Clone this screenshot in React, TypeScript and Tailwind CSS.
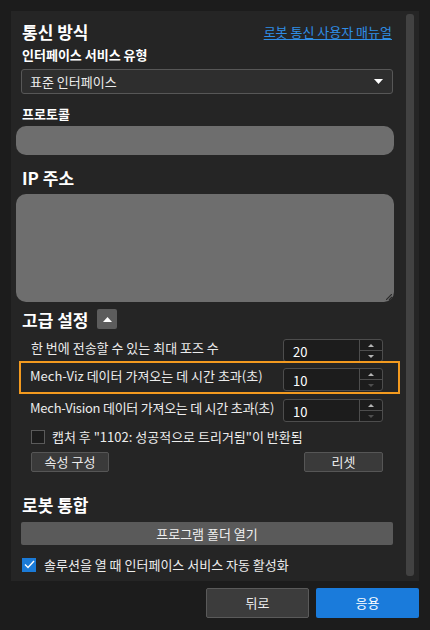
import React from 'react';

const FONT = "font-['Noto_Sans_CJK_KR','Noto_Sans',sans-serif]";

function Caret({ up = false, color = '#ffffff', w = 9, h = 5 }: { up?: boolean; color?: string; w?: number; h?: number }) {
  return (
    <svg width={w} height={h} viewBox={`0 0 ${w} ${h}`}>
      {up ? (
        <polygon points={`0,${h} ${w / 2},0 ${w},${h}`} fill={color} />
      ) : (
        <polygon points={`0,0 ${w},0 ${w / 2},${h}`} fill={color} />
      )}
    </svg>
  );
}

function SpinBox({ value, downDim }: { value: string; downDim?: boolean }) {
  return (
    <div className="flex w-[100px] h-[23px] shrink-0 bg-[#1c1c1c] border border-[#4d4d4d] rounded-[3px]">
      <div className="flex-1 flex items-center pl-[9px] pt-[2px] text-[13px] leading-[16px] text-white">{value}</div>
      <div className="w-[23px] flex flex-col border-l border-[#4d4d4d]">
        <div className="flex-1 flex items-center justify-center border-b border-[#4d4d4d]">
          <Caret up color="#b5b5b5" w={6} h={3} />
        </div>
        <div className="flex-1 flex items-center justify-center">
          <Caret color={downDim ? '#4e4e4e' : '#b5b5b5'} w={6} h={3} />
        </div>
      </div>
    </div>
  );
}

export default function App() {
  return (
    <div className={`w-[430px] h-[630px] bg-[#1c1c1c] pt-[11px] pl-[11px] ${FONT} text-[#ececec]`}>
      <div className="w-[408px] h-[570px] bg-[#252525] flex overflow-hidden">
        <div className="w-[395px] flex flex-col">
          <div className="flex items-center justify-between pt-[11px] pl-[11px] pr-[14px] h-[31px]">
            <h2 className="text-[17px] leading-[20px] font-bold text-white">통신 방식</h2>
            <a className="text-[13px] leading-[16px] text-[#2f8ee6] underline underline-offset-2">로봇 통신 사용자 매뉴얼</a>
          </div>

          <div className="mt-[5px] pl-[11px] text-[13px] leading-[16px] font-bold text-white">인터페이스 서비스 유형</div>
          <div className="mt-[6px] ml-[10px] mr-[13px] h-[25px] flex items-center justify-between bg-[#2e2e2e] border border-[#575757] rounded-[3px] pl-[8px] pr-[9px]">
            <span className="text-[13px] leading-[16px]">표준 인터페이스</span>
            <Caret w={9} h={5} />
          </div>

          <div className="mt-[12px] pl-[11px] text-[13px] leading-[16px] font-bold text-white">프로토콜</div>
          <div className="mt-[4px] ml-[5px] mr-[12px] h-[29px] bg-[#6e6e6e] rounded-[10px]" />

          <h2 className="mt-[13px] pl-[11px] text-[17px] leading-[20px] font-bold text-white">IP 주소</h2>
          <div className="mt-[6px] ml-[5px] mr-[12px] h-[108px] bg-[#6e6e6e] rounded-[10px] flex items-end justify-end">
            <svg width="6" height="6" viewBox="0 0 6 6" className="mr-[2px] mb-[2px]">
              <path d="M6 0 L0 6 M6 3 L3 6" stroke="#2a2a2a" strokeWidth="1.2" />
            </svg>
          </div>

          <div className="mt-[7px] pl-[11px] h-[20px] flex items-center gap-[9px]">
            <h2 className="text-[17px] leading-[20px] font-bold text-white pt-[2px]">고급 설정</h2>
            <button className="w-[20px] h-[20px] bg-[#5c5c5c] rounded-[2px] flex items-center justify-center">
              <Caret up w={9} h={5} />
            </button>
          </div>

          <div className="mt-[10px] h-[23px] flex items-center justify-between pl-[20px] pr-[23px]">
            <span className="text-[13px] leading-[16px] pb-[6px]">한 번에 전송할 수 있는 최대 포즈 수</span>
            <SpinBox value="20" />
          </div>

          <div className="-mt-[1px] ml-[8px] mr-[6px] h-[33px] border-2 border-[#f39a1f] pt-[4px] pl-[9px] pr-[15px] flex items-center justify-between">
            <span className="text-[13px] leading-[16px] pb-[7px]">Mech-Viz 데이터 가져오는 데 시간 초과(초)</span>
            <SpinBox value="10" downDim />
          </div>

          <div className="mt-[5px] h-[23px] flex items-center justify-between pl-[19px] pr-[23px]">
            <span className="text-[13px] leading-[16px] tracking-[-0.25px] whitespace-nowrap pb-[5px]">Mech-Vision 데이터 가져오는 데 시간 초과(초)</span>
            <SpinBox value="10" downDim />
          </div>

          <div className="mt-[8px] pl-[20px] h-[14px] flex items-center gap-[7px]">
            <div className="w-[14px] h-[14px] bg-[#1c1c1c] border border-[#5a5a5a]" />
            <span className="text-[13px] leading-[14px]">캡처 후 "1102: 성공적으로 트리거됨"이 반환됨</span>
          </div>

          <div className="mt-[8px] pl-[20px] pr-[23px] flex justify-between">
            <button className="w-[78px] h-[20px] bg-[#3a3a3a] border border-[#565656] rounded-[2px] text-[13px] leading-[18px] text-[#ececec]">속성 구성</button>
            <button className="w-[79px] h-[20px] bg-[#3a3a3a] border border-[#565656] rounded-[2px] text-[13px] leading-[18px] text-[#ececec]">리셋</button>
          </div>

          <h2 className="mt-[23px] pl-[11px] text-[17px] leading-[20px] font-bold text-white">로봇 통합</h2>
          <button className="mt-[7px] ml-[10px] mr-[13px] h-[23px] bg-[#5a5a5a] rounded-[2px] text-[13px] leading-[16px] text-[#f0f0f0]">프로그램 폴더 열기</button>

          <div className="mt-[12px] pl-[11px] h-[15px] flex items-center gap-[8px]">
            <div className="w-[14px] h-[14px] bg-[#1b7bd8] flex items-center justify-center">
              <svg width="11" height="9" viewBox="0 0 11 9">
                <path d="M1 4.5 L4 7.5 L10 1" stroke="#ffffff" strokeWidth="1.4" fill="none" />
              </svg>
            </div>
            <span className="text-[13px] leading-[14px]">솔루션을 열 때 인터페이스 서비스 자동 활성화</span>
          </div>
        </div>
        <div className="w-[13px] pt-[3px] bg-[#252525]">
          <div className="w-[8px] h-[562px] bg-[#424242] rounded-[3px]" />
        </div>
      </div>

      <div className="mt-[7px] pr-[11px] flex justify-end gap-[7px]">
        <button className="w-[103px] h-[30px] bg-[#3c3c3c] border border-[#5a5a5a] rounded-[2px] text-[13px] text-[#ececec]">뒤로</button>
        <button className="w-[103px] h-[30px] bg-[#1a7bdb] rounded-[2px] text-[13px] text-white">응용</button>
      </div>
    </div>
  );
}
